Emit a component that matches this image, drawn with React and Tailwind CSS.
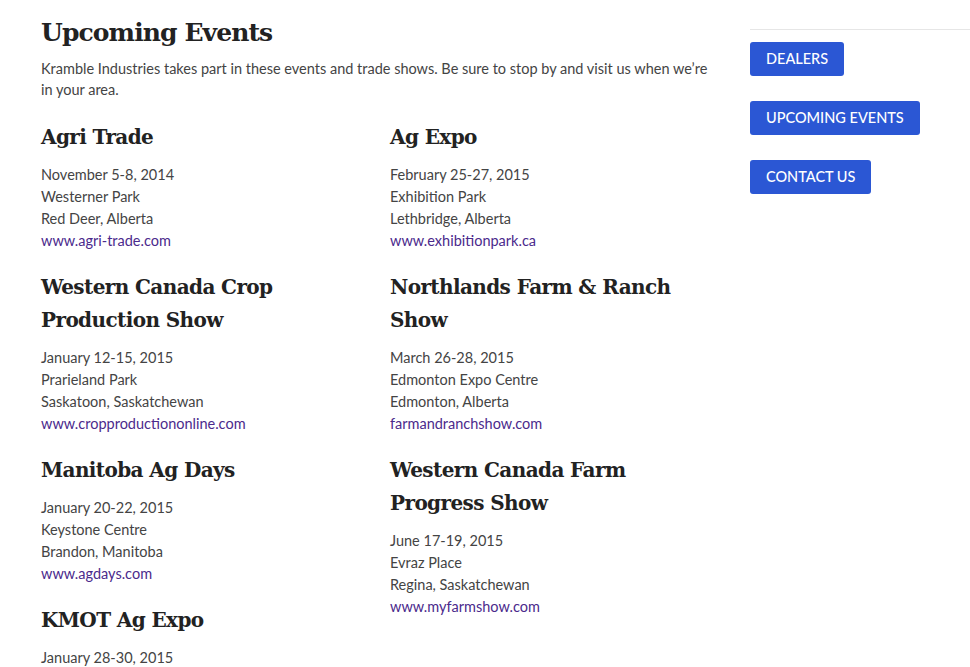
import React from 'react';

const left = [
    { name: 'Agri Trade', date: 'November 5-8, 2014', place: 'Westerner Park', city: 'Red Deer, Alberta', url: 'www.agri-trade.com' },
    { name: 'Western Canada Crop Production Show', date: 'January 12-15, 2015', place: 'Prarieland Park', city: 'Saskatoon, Saskatchewan', url: 'www.cropproductiononline.com' },
    { name: 'Manitoba Ag Days', date: 'January 20-22, 2015', place: 'Keystone Centre', city: 'Brandon, Manitoba', url: 'www.agdays.com' },
    { name: 'KMOT Ag Expo', date: 'January 28-30, 2015' },
];

const right = [
    { name: 'Ag Expo', date: 'February 25-27, 2015', place: 'Exhibition Park', city: 'Lethbridge, Alberta', url: 'www.exhibitionpark.ca' },
    { name: 'Northlands Farm & Ranch Show', date: 'March 26-28, 2015', place: 'Edmonton Expo Centre', city: 'Edmonton, Alberta', url: 'farmandranchshow.com' },
    { name: 'Western Canada Farm Progress Show', date: 'June 17-19, 2015', place: 'Evraz Place', city: 'Regina, Saskatchewan', url: 'www.myfarmshow.com' },
];

const heading = { fontFamily: '"DejaVu Serif", serif' };

function Event({ e }) {
    return (
        <div className="mb-[19px]">
            <h3 className="text-[20px] font-bold leading-[33px] text-[#222] tracking-[-0.6px]" style={heading}>{e.name}</h3>
            <div className="mt-[10px] text-[14.5px] leading-[22px] text-[#444]">
                <div>{e.date}</div>
                {e.place && <div>{e.place}</div>}
                {e.city && <div>{e.city}</div>}
                {e.url && <a href="#" className="text-[#4b2a8c]">{e.url}</a>}
            </div>
        </div>
    );
}

export default function App() {
    return (
        <div className="w-[970px] h-[667px] overflow-hidden bg-white flex" style={{ fontFamily: 'Lato, "Liberation Sans", sans-serif' }}>
            <div className="w-[715px] pl-[41px] pt-[16px]">
                <h1 className="text-[25px] font-bold leading-[34px] text-[#222] tracking-[-0.9px]" style={heading}>Upcoming Events</h1>
                <p className="mt-[8px] text-[14.5px] leading-[21px] text-[#444] pr-[2px]">
                    Kramble Industries takes part in these events and trade shows. Be sure to stop by and visit us when we’re in your area.
                </p>
                <div className="mt-[21px] flex">
                    <div className="w-[349px] flex flex-col">
                        {left.map((e) => <Event key={e.name} e={e} />)}
                    </div>
                    <div className="w-[325px] flex flex-col">
                        {right.map((e) => <Event key={e.name} e={e} />)}
                    </div>
                </div>
            </div>
            <div className="ml-[35px] flex-1 pt-[29px]">
                <div className="border-t border-[#e6e6e6] pt-[12px] flex flex-col items-start gap-[25px]">
                    {['DEALERS', 'UPCOMING EVENTS', 'CONTACT US'].map((b) => (
                        <a key={b} href="#" className="h-[34px] px-[16px] flex items-center rounded-[3px] bg-[#2b57d4] text-white text-[14.5px] font-medium">
                            {b}
                        </a>
                    ))}
                </div>
            </div>
        </div>
    );
}
